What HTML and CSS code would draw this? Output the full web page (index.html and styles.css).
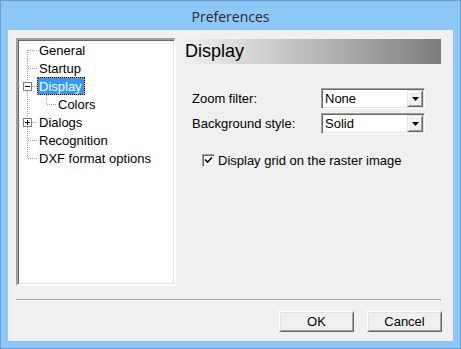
FILE: index.html
```html
<!DOCTYPE html>
<html>
<head>
<meta charset="utf-8">
<link rel="stylesheet" href="styles.css">
</head>
<body>
<div class="window">
  <div class="titlebar">Preferences</div>
  <div class="client">
    <div class="main">
      <div class="tree">
        <div class="row">
          <svg class="pre" width="19" height="18"><path d="M9.5 9V18" class="dot"/><path d="M10 9.5H19" class="dot"/></svg>
          <span class="label">General</span>
        </div>
        <div class="row">
          <svg class="pre" width="19" height="18"><path d="M9.5 0V18" class="dot"/><path d="M10 9.5H19" class="dot"/></svg>
          <span class="label">Startup</span>
        </div>
        <div class="row">
          <svg class="pre" width="19" height="18"><path d="M9.5 0V4M9.5 14V18" class="dot"/><path d="M14 9.5H19" class="dot"/><rect x="5.5" y="5.5" width="8" height="8" class="box"/><path d="M7 9.5H12" class="sign"/></svg>
          <span class="label sel">Display</span>
        </div>
        <div class="row">
          <svg class="pre" width="38" height="18"><path d="M9.5 0V18" class="dot"/><path d="M28.5 0V9" class="dot"/><path d="M29 9.5H38" class="dot"/></svg>
          <span class="label">Colors</span>
        </div>
        <div class="row">
          <svg class="pre" width="19" height="18"><path d="M9.5 0V4M9.5 14V18" class="dot"/><path d="M14 9.5H19" class="dot"/><rect x="5.5" y="5.5" width="8" height="8" class="box"/><path d="M7 9.5H12M9.5 7V12" class="sign"/></svg>
          <span class="label">Dialogs</span>
        </div>
        <div class="row">
          <svg class="pre" width="19" height="18"><path d="M9.5 0V18" class="dot"/><path d="M10 9.5H19" class="dot"/></svg>
          <span class="label">Recognition</span>
        </div>
        <div class="row">
          <svg class="pre" width="19" height="18"><path d="M9.5 0V10" class="dot"/><path d="M10 9.5H19" class="dot"/></svg>
          <span class="label">DXF format options</span>
        </div>
      </div>
      <div class="panel">
        <div class="header">Display</div>
        <div class="form">
          <div class="frow">
            <span class="flabel">Zoom filter:</span>
            <div class="combo"><span class="ctext">None</span><span class="cbtn"><svg width="7" height="4"><path d="M0 0H7L3.5 4Z" fill="#000"/></svg></span></div>
          </div>
          <div class="frow">
            <span class="flabel">Background style:</span>
            <div class="combo"><span class="ctext">Solid</span><span class="cbtn"><svg width="7" height="4"><path d="M0 0H7L3.5 4Z" fill="#000"/></svg></span></div>
          </div>
        </div>
        <div class="check">
          <span class="cbox"><svg width="9" height="9"><path d="M1 3.5L3.5 6L8 1.5" fill="none" stroke="#000" stroke-width="1.6"/></svg></span>
          <span class="ctxt">Display grid on the raster image</span>
        </div>
      </div>
    </div>
    <div class="sep"></div>
    <div class="buttons">
      <button class="btn">OK</button>
      <button class="btn">Cancel</button>
    </div>
  </div>
</div>
</body>
</html>
```
FILE: styles.css
```css
* { box-sizing: border-box; }
html, body { margin: 0; padding: 0; }
body {
  width: 461px;
  height: 349px;
  font-family: "Liberation Sans", Arial, sans-serif;
  font-size: 13px;
  color: #000;
}
.window {
  width: 461px;
  height: 349px;
  background: #8cc7f8;
  border: 1px solid #6e9ed0;
  display: flex;
  flex-direction: column;
}
.titlebar {
  height: 29px;
  display: flex;
  align-items: center;
  justify-content: center;
  font-family: "Open Sans", "Noto Sans", sans-serif;
  font-size: 14px;
  color: #2b2b2b;
  padding-top: 1px;
}
.client {
  margin: 0 7px;
  height: 311px;
  background: #f0f0f0;
  padding: 8px 12px 0 8px;
  display: flex;
  flex-direction: column;
}
.main {
  display: flex;
  gap: 6px;
  height: 248px;
}
.tree {
  width: 160px;
  height: 248px;
  background: #fff;
  border-style: solid;
  border-width: 2px;
  border-color: #a0a0a0 #fff #fff #a0a0a0;
  box-shadow: inset 1px 1px 0 #696969, inset -1px -1px 0 #e3e3e3;
  padding-top: 1px;
}
.row {
  height: 18px;
  display: flex;
  align-items: center;
}
.pre { display: block; flex: none; shape-rendering: crispEdges; }
.dot { stroke: #a0a0a0; stroke-width: 1; stroke-dasharray: 1 1; fill: none; }
.box { fill: #fff; stroke: #808080; stroke-width: 1; }
.sign { stroke: #000; stroke-width: 1; fill: none; }
.label {
  height: 18px;
  line-height: 16px;
  padding: 1px 2px 0 1px;
  border: 1px solid transparent;
  white-space: nowrap;
}
.label.sel {
  color: #fff;
  border: none;
  padding: 2px 3px 1px 2px;
  background:
    repeating-linear-gradient(90deg, #f29a3a 0 1px, #000 1px 2px) top left / 100% 1px no-repeat,
    repeating-linear-gradient(90deg, #f29a3a 0 1px, #000 1px 2px) bottom left / 100% 1px no-repeat,
    repeating-linear-gradient(180deg, #f29a3a 0 1px, #000 1px 2px) top left / 1px 100% no-repeat,
    repeating-linear-gradient(180deg, #f29a3a 0 1px, #000 1px 2px) top right / 1px 100% no-repeat,
    #3399ff;
}
.panel {
  flex: 1;
  display: flex;
  flex-direction: column;
}
.header {
  margin-top: 1px;
  height: 25px;
  background: linear-gradient(90deg, #f0f0f0 0%, #d2d2d2 30%, #a8a8a8 65%, #7c7c7c 100%);
  font-size: 18px;
  line-height: 25px;
  padding-left: 3px;
  color: #000;
}
.form {
  margin-top: 24px;
  display: flex;
  flex-direction: column;
  gap: 4px;
}
.frow {
  display: flex;
  align-items: center;
  height: 21px;
}
.flabel {
  width: 139px;
  padding-left: 10px;
}
.combo {
  width: 104px;
  height: 21px;
  background: #fff;
  border-style: solid;
  border-width: 1px;
  border-color: #a0a0a0 #fff #fff #a0a0a0;
  box-shadow: inset 1px 1px 0 #696969, inset -1px -1px 0 #e3e3e3;
  display: flex;
  padding: 1px;
}
.ctext {
  flex: 1;
  padding-left: 2px;
  line-height: 17px;
}
.cbtn {
  width: 16px;
  height: 17px;
  background: #f0f0f0;
  border-style: solid;
  border-width: 1px;
  border-color: #e3e3e3 #696969 #696969 #e3e3e3;
  box-shadow: inset 1px 1px 0 #fff, inset -1px -1px 0 #a0a0a0;
  display: flex;
  align-items: center;
  justify-content: center;
  padding-top: 1px;
}
.cbtn svg { display: block; }
.check {
  margin-top: 20px;
  margin-left: 20px;
  display: flex;
  align-items: center;
  gap: 3px;
  height: 13px;
}
.cbox {
  width: 13px;
  height: 13px;
  background: #fff;
  border-style: solid;
  border-width: 1px;
  border-color: #a0a0a0 #fff #fff #a0a0a0;
  box-shadow: inset 1px 1px 0 #696969, inset -1px -1px 0 #e3e3e3;
  display: flex;
  align-items: center;
  justify-content: center;
}
.cbox svg { display: block; }
.sep {
  margin-top: 13px;
  height: 2px;
  border-top: 1px solid #a0a0a0;
  border-bottom: 1px solid #fff;
}
.buttons {
  margin-top: 10px;
  display: flex;
  justify-content: flex-end;
  gap: 13px;
  margin-right: -1px;
}
.btn {
  width: 75px;
  height: 21px;
  font-family: "Liberation Sans", Arial, sans-serif;
  font-size: 13px;
  color: #000;
  background: #f0f0f0;
  border-style: solid;
  border-width: 1px;
  border-color: #fff #696969 #696969 #fff;
  box-shadow: inset 1px 1px 0 #e3e3e3, inset -1px -1px 0 #a0a0a0;
  padding: 0;
  margin: 0;
}
```
